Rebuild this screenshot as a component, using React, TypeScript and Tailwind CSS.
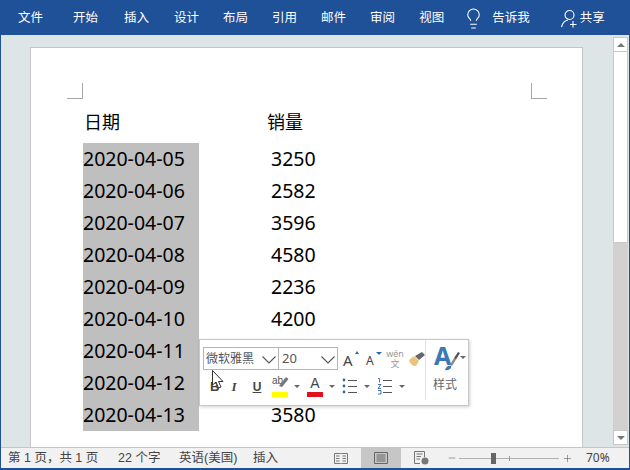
import { Lightbulb, Minus, Plus } from "lucide-react";

const tabs = [
  { label: "文件", ml: "ml-0" },
  { label: "开始", ml: "ml-[30px]" },
  { label: "插入", ml: "ml-[26px]" },
  { label: "设计", ml: "ml-[25px]" },
  { label: "布局", ml: "ml-[24px]" },
  { label: "引用", ml: "ml-[24px]" },
  { label: "邮件", ml: "ml-[24px]" },
  { label: "审阅", ml: "ml-[24px]" },
  { label: "视图", ml: "ml-[24px]" },
];

const rows = [
  ["2020-04-05", "3250"],
  ["2020-04-06", "2582"],
  ["2020-04-07", "3596"],
  ["2020-04-08", "4580"],
  ["2020-04-09", "2236"],
  ["2020-04-10", "4200"],
  ["2020-04-11", ""],
  ["2020-04-12", ""],
  ["2020-04-13", "3580"],
];

function Caret() {
  return <span className="block w-0 h-0 border-x-[3px] border-x-transparent border-t-[3px] border-t-[#666]" />;
}

function ComboArrow() {
  return (
    <svg width="14" height="8" viewBox="0 0 14 8" fill="none" stroke="#555" strokeWidth="1.1" className="mr-[2px] mt-[2px]">
      <path d="M.5 .5 L7 7 L13.5 .5" />
    </svg>
  );
}

function MiniToolbar() {
  return (
    <div className="absolute left-[199px] top-[339px] w-[270px] h-[67px] bg-white border border-[#c8c8c8] shadow-[1px_1px_3px_rgba(0,0,0,0.2)] flex font-['Liberation_Sans','Noto_Sans_CJK_SC',sans-serif] text-[#444]">
      <div className="w-[226px] pl-[3px] pt-[7px] flex flex-col border-r border-[#e2e2e2] h-[60px]">
        <div className="flex items-center h-[23px]">
          <div className="w-[76px] h-[23px] border border-[#b5b5b5] flex items-center justify-between pl-[2px] text-[12px] text-[#555] whitespace-nowrap">
            <span>微软雅黑</span>
            <ComboArrow />
          </div>
          <div className="w-[59px] h-[23px] border border-l-0 border-[#b5b5b5] flex items-center justify-between pl-[3px] text-[13px] text-[#555]">
            <span className="font-['Noto_Sans',sans-serif]">20</span>
            <ComboArrow />
          </div>
          <div className="ml-[4px] w-[20px] h-[22px] relative font-['Noto_Sans',sans-serif] text-[15px] leading-[24px] pl-px">
            A
            <span className="absolute right-[3px] top-[3px] w-0 h-0 border-x-[2px] border-x-transparent border-b-[3px] border-b-[#2b6ca8]" />
          </div>
          <div className="ml-[3px] w-[20px] h-[22px] relative font-['Noto_Sans',sans-serif] text-[12px] leading-[26px] pl-px">
            A
            <span className="absolute right-[3px] top-[4px] w-0 h-0 border-x-[3px] border-x-transparent border-t-[3px] border-t-[#2b6ca8]" />
          </div>
          <div className="ml-px w-[18px] flex flex-col items-center text-[9px] leading-[10px] text-[#999]">
            <span className="font-['Noto_Sans',sans-serif]">wén</span>
            <span>文</span>
          </div>
          <svg width="16" height="14" viewBox="0 0 16 14" className="ml-[5px]">
            <path d="M0 8 L5 4 L10 9 L7 14 C4 14 1 12 0 8Z" fill="#e8c47c" />
            <path d="M6 4 L13 0 L16 3 L10 8Z" fill="#666" />
          </svg>
        </div>
        <div className="flex items-center mt-[4px] h-[24px] pl-[7px] text-[13px]">
          <span className="w-[12px] pt-[2px] font-bold">B</span>
          <span className="ml-[8px] pt-[2px] w-[8px] text-center italic font-['Liberation_Serif',serif] font-bold">I</span>
          <span className="ml-[14px] pt-[2px] w-[10px] text-center underline font-bold text-[12px]">U</span>
          <div className="ml-[10px] w-[16px] h-[22px] flex flex-col justify-end relative">
            <span className="absolute top-0 left-0 text-[10px] leading-[12px] text-[#555]">ab</span>
            <svg width="10" height="12" viewBox="0 0 10 12" className="absolute left-[7px] top-px">
              <path d="M0 10 L7 1 L9.5 3 L3 11Z" fill="#777" />
            </svg>
            <div className="h-[5px] bg-[#ffff00]" />
          </div>
          <span className="ml-[6px]"><Caret /></span>
          <div className="ml-[7px] w-[16px] h-[22px] flex flex-col items-center justify-end">
            <span className="text-[14px] leading-[17px]">A</span>
            <div className="h-[5px] w-full bg-[#e0101c]" />
          </div>
          <span className="ml-[6px]"><Caret /></span>
          <svg width="15" height="18" viewBox="0 0 15 18" className="ml-[7px]" stroke="#555" fill="none">
            <circle cx="2" cy="3" r="1.4" fill="#2b6ca8" stroke="none" />
            <circle cx="2" cy="9" r="1.4" fill="#2b6ca8" stroke="none" />
            <circle cx="2" cy="15" r="1.4" fill="#2b6ca8" stroke="none" />
            <path d="M6 3.5H15M6 9.5H15M6 15.5H15" />
          </svg>
          <span className="ml-[7px]"><Caret /></span>
          <svg width="15" height="18" viewBox="0 0 15 18" className="ml-[7px]" stroke="#555" fill="none">
            <path d="M1 1.5 H2.5 V5.5 M1 7.5 H4 L1 11.5 H4 M1 13.5 H4 V17 H1" stroke="#2b6ca8" strokeWidth="0.9" />
            <path d="M6 3.5H15M6 9.5H15M6 15.5H15" />
          </svg>
          <span className="ml-[7px]"><Caret /></span>
        </div>
      </div>
      <div className="flex-1 flex flex-col pl-[7px] pt-[6px]">
        <div className="relative w-[32px] h-[26px]">
          <span className="absolute left-[1px] top-[-8px] font-['Noto_Sans',sans-serif] font-bold text-[25px] leading-[34px] text-[#3b78b5]">A</span>
          <svg width="16" height="20" viewBox="0 0 16 20" className="absolute left-[12px] top-[5px]">
            <path d="M5 14 L9 7 L11 8.5 L7 15Z" fill="#888" />
            <path d="M9 7 L13 1 L15 2 L11 8.5Z" fill="#555" />
            <path d="M0 19 C1 16 3 14 6 15 C7 17 4 20 0 19Z" fill="#3b78b5" />
          </svg>
          <span className="absolute left-[27px] top-[10px]"><Caret /></span>
        </div>
        <span className="mt-[6px] text-[12px] leading-[14px] text-[#666]">样式</span>
      </div>
    </div>
  );
}

function Cursor() {
  return (
    <svg width="14" height="21" viewBox="0 0 14 21" className="absolute left-[212px] top-[370px]">
      <path d="M.5 .5 L.5 15 L4 12 L6.5 18 L9 17 L6.5 11.5 L11 11.5Z" fill="#fff" stroke="#333" strokeWidth="1" />
    </svg>
  );
}

function ScrollBtn({ up }: { up?: boolean }) {
  return (
    <div className="h-[15px] bg-white border border-[#c8c8c8] flex items-center justify-center shrink-0">
      <span
        className={
          up
            ? "w-0 h-0 border-x-[4px] border-x-transparent border-b-[4px] border-b-[#777]"
            : "w-0 h-0 border-x-[4px] border-x-transparent border-t-[4px] border-t-[#777]"
        }
      />
    </div>
  );
}

export default function App() {
  return (
    <div className="relative w-[630px] h-[470px] overflow-hidden flex flex-col bg-[#1f5199] font-['Noto_Sans','Noto_Sans_CJK_SC',sans-serif]">
      {/* ribbon */}
      <header className="h-[35px] flex items-center pl-[18px] pt-px text-white text-[12.5px] font-['Liberation_Sans','Noto_Sans_CJK_SC',sans-serif] shrink-0">
        {tabs.map((t) => (
          <span key={t.label} className={t.ml}>
            {t.label}
          </span>
        ))}
        <Lightbulb size={23} strokeWidth={1.1} className="ml-[18px]" />
        <span className="ml-[7px]">告诉我</span>
        <svg width="16" height="19" viewBox="0 0 16 19" className="ml-[31px]" fill="none" stroke="#fff" strokeWidth="1.1">
          <circle cx="8.5" cy="6" r="4.5" />
          <path d="M.5 18 C1.5 14 4 11.5 7 11" />
          <path d="M12 12 V18.5 M9 15.5 H15.5" />
        </svg>
        <span className="ml-[3px]">共享</span>
      </header>

      {/* document area */}
      <div className="flex-1 mx-px flex bg-[#dde5e6] min-h-0 overflow-hidden">
        <div className="flex-1 pl-[29px] pt-[12px] min-w-0">
          <div className="relative w-[553px] h-[420px] bg-white border border-[#c6c6c6] pl-[52px] pt-[58px] text-[19.5px] text-black">
            <div className="flex h-8 items-center mb-[5px] text-[18px]">
              <span className="w-[184px] pl-px">日期</span>
              <span>销量</span>
            </div>
            {rows.map(([date, qty]) => (
              <div key={date} className="flex h-8 items-center">
                <span className="w-[116px] h-8 leading-8 bg-[#bfbfbf]">{date}</span>
                <span className="ml-[72px]">{qty}</span>
              </div>
            ))}
            <div className="absolute left-[36px] top-[35px] w-4 h-4 border-r border-b border-[#a6a6a6]" />
            <div className="absolute left-[500px] top-[35px] w-4 h-4 border-l border-b border-[#a6a6a6]" />
          </div>
        </div>
        <div className="w-[15px] mr-px mt-[2px] mb-[2px] bg-[#d4d0d0] flex flex-col">
          <ScrollBtn up />
          <div className="h-[191px] bg-white border-x border-b border-[#c8c8c8]" />
          <div className="flex-1" />
          <ScrollBtn />
        </div>
      </div>

      {/* status bar */}
      <footer className="h-[21px] mx-px mb-[2px] shrink-0 flex items-center bg-[#f1f1f1] border-t border-[#c6c6c6] text-[12.5px] text-[#444] font-['Liberation_Sans','Noto_Sans_CJK_SC',sans-serif] whitespace-nowrap">
        <span className="ml-[7px] w-[90px]">第 1 页，共 1 页</span>
        <span className="ml-[20px] w-[42px]">22 个字</span>
        <span className="ml-[19px] w-[56px]">英语(美国)</span>
        <span className="ml-[18px] w-[26px]">插入</span>
        <svg width="14" height="13" viewBox="0 0 14 13" className="ml-[55px]" fill="none" stroke="#777">
          <path d="M.5 1.5H6.5L7 2L7.5 1.5H13.5V11.5H7.5L7 12L6.5 11.5H.5Z M2 4H5.5M2 6.5H5.5M2 9H5.5M8.5 4H12M8.5 6.5H12M8.5 9H12" />
        </svg>
        <div className="ml-[13px] w-[40px] h-full bg-[#c6c6c6] flex items-center justify-center">
          <svg width="14" height="12" viewBox="0 0 14 12" fill="none" stroke="#666">
            <path d="M.5 .5H13.5V11.5H.5Z M2.5 3H11.5M2.5 5H11.5M2.5 7H11.5M2.5 9H11.5" />
          </svg>
        </div>
        <svg width="15" height="14" viewBox="0 0 15 14" className="ml-[13px]" fill="none" stroke="#777">
          <path d="M.5 .5H10.5V6M.5 .5V12.5H6M2.5 3H8.5M2.5 5.5H7M2.5 8H6" />
          <circle cx="11" cy="10" r="3.5" fill="#777" stroke="none" />
        </svg>
        <Minus size={10} strokeWidth={1.3} className="ml-[18px] text-[#555]" />
        <div className="ml-[2px] relative w-[100px] h-px bg-[#b0b0b0]">
          <span className="absolute left-[32px] top-[-5px] w-[5px] h-[11px] bg-[#666]" />
          <span className="absolute left-[50px] top-[-2px] w-px h-[5px] bg-[#999]" />
        </div>
        <Plus size={11} strokeWidth={1.2} className="ml-[3px] text-[#555]" />
        <span className="ml-[13px] text-[12px] font-['Noto_Sans',sans-serif]">70%</span>
      </footer>

      <MiniToolbar />
      <Cursor />
    </div>
  );
}
